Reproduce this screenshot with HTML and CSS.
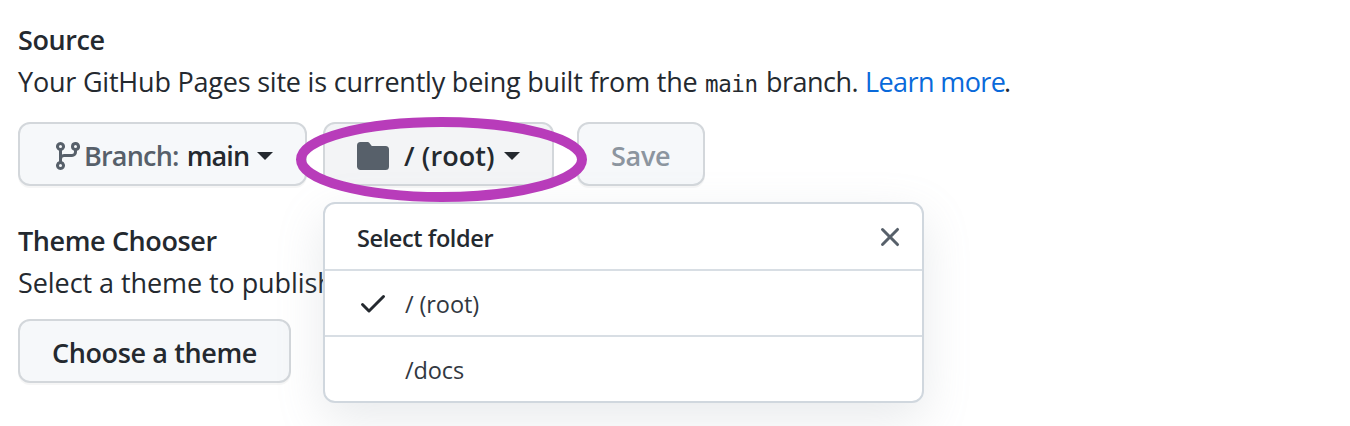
FILE: index.html
```html
<!DOCTYPE html>
<html lang="en">
<head>
<meta charset="utf-8">
<title>GitHub Pages settings</title>
<link rel="stylesheet" href="styles.css">
</head>
<body>
<main class="settings">
  <section class="section">
    <h2 class="heading source-title">Source</h2>
    <p class="description"><span class="built">Your GitHub Pages site is currently being built from the</span><code class="code">main</code><span class="branch-word">branch.</span><a class="link" href="#">Learn more</a>.</p>
    <div class="controls">
      <button class="btn btn-branch">
        <svg class="icon" width="32" height="32" viewBox="0 0 16 16"><path fill-rule="evenodd" d="M11.75 2.5a.75.75 0 100 1.5.75.75 0 000-1.5zm-2.25.75a2.25 2.25 0 113 2.122V6A2.5 2.5 0 0110 8.5H6a1 1 0 00-1 1v1.128a2.251 2.251 0 11-1.5 0V5.372a2.25 2.25 0 111.5 0v1.836A2.492 2.492 0 016 7h4a1 1 0 001-1v-.628A2.25 2.25 0 019.5 3.25zM4.25 12a.75.75 0 100 1.5.75.75 0 000-1.5zM3.5 3.25a.75.75 0 111.5 0 .75.75 0 01-1.5 0z"/></svg>
        <span class="label-muted">Branch:</span><span class="branch-name">main</span><span class="caret"></span>
      </button>
      <div class="folder">
        <button class="btn btn-folder">
          <svg class="icon" width="32" height="32" viewBox="0 0 16 16"><path d="M1.75 1A1.75 1.75 0 0 0 0 2.75v10.5C0 14.216.784 15 1.75 15h12.5A1.75 1.75 0 0 0 16 13.250v-8.500A1.750 1.750 0 0 0 14.250 3H7.500a.25.25 0 0 1-.2-.1l-.9-1.200C6.070 1.260 5.550 1 5 1z"/></svg>
          <span class="folder-name">/ (root)</span><span class="caret"></span>
        </button>
        <div class="menu">
          <div class="menu-header"><span class="menu-title">Select folder</span>
            <svg class="close" width="32" height="32" viewBox="0 0 16 16"><path fill-rule="evenodd" d="M3.72 3.72a.75.75 0 011.06 0L8 6.94l3.22-3.22a.75.75 0 111.06 1.06L9.06 8l3.22 3.22a.75.75 0 11-1.06 1.06L8 9.06l-3.22 3.22a.75.75 0 01-1.06-1.06L6.94 8 3.72 4.78a.75.75 0 010-1.06z"/></svg>
          </div>
          <div class="menu-item"><svg class="check" width="32" height="32" viewBox="0 0 16 16"><path fill-rule="evenodd" d="M13.78 4.22a.75.75 0 010 1.06l-7.25 7.25a.75.75 0 01-1.06 0L2.22 9.28a.75.75 0 011.06-1.06L6 10.94l6.72-6.72a.75.75 0 011.06 0z"/></svg><span class="item-root">/ (root)</span></div>
          <div class="menu-item menu-item-plain"><span class="item-docs">/docs</span></div>
        </div>
        <svg class="highlight" width="292" height="86" viewBox="0 0 292 86"><ellipse cx="146.500" cy="43.500" rx="140.500" ry="37.500"/></svg>
      </div>
      <button class="btn btn-save" disabled><span class="save-label">Save</span></button>
    </div>
  </section>
  <section class="section section-theme">
    <h2 class="heading theme-title">Theme Chooser</h2>
    <p class="description theme-text">Select a theme to publish</p>
    <button class="btn btn-theme"><span class="theme-label">Choose a theme</span></button>
  </section>
</main>
</body>
</html>
```
FILE: styles.css
```css
* { box-sizing: border-box; }
body {
  margin: 0;
  height: 426px;
  overflow: hidden;
  background: #fff;
  color: #24292f;
  font: 27px/42px "Open Sans", "Noto Sans", sans-serif;
}
.settings { padding: 19px 18px 0; }
.heading { margin: 0; font-size: 27px; font-weight: 600; line-height: 42px; letter-spacing: -.4px; }
.description { margin: 0; display: flex; height: 42px; white-space: pre; }
.built { width: 679px; letter-spacing: -.21px; }
.code { width: 69px; padding-left: 8px; font: 22.500px/46px "DejaVu Sans Mono", monospace; letter-spacing: -.4px; }
.branch-word { width: 99px; letter-spacing: -.5px; }
.link { width: 139px; color: #0969da; text-decoration: none; letter-spacing: -.6px; }
.controls { display: flex; margin-top: 19px; }
.btn {
  display: flex;
  align-items: center;
  height: 64px;
  padding: 3px 32px 0;
  border: 2px solid #d3d7db;
  border-radius: 12px;
  background: #f6f8fa;
  box-shadow: 0 2px 0 rgba(27, 31, 36, .04);
  color: #24292f;
  font: 600 27px/40px "Open Sans", "Noto Sans", sans-serif;
  white-space: nowrap;
}
.icon { fill: #57606a; flex: none; }
.caret { flex: none; border: 8px solid transparent; border-top-color: #24292f; border-bottom: 0; }
.folder { position: relative; margin: 0 23px 0 16px; }
.btn-branch { width: 289px; }
.btn-folder { width: 231px; background: #f3f4f6; }
.btn-save { width: 128px; color: #8c959f; }
.save-label { letter-spacing: -.3px; }
.label-muted { color: #57606a; letter-spacing: -.8px; }
.menu {
  position: absolute;
  top: 80px;
  left: 0;
  z-index: 1;
  width: 601px;
  height: 201px;
  border: 2px solid #d0d7de;
  border-radius: 12px;
  background: #fff;
  box-shadow: 0 16px 48px rgba(140, 149, 159, .2);
  font-size: 23.500px;
}
.menu-header, .menu-item { display: flex; align-items: center; height: 66px; border-bottom: 2px solid #d8dee4; }
.menu-header { height: 67px; justify-content: space-between; padding: 2px 16px 0 32px; font-weight: 600; letter-spacing: -.4px; }
.close { fill: #57606a; margin-top: -1px; }
.menu-item { padding: 2px 32px 0; color: #32383f; letter-spacing: -.1px; }
.menu-item:last-child { border: 0; height: 64px; padding-top: 1px; }
.check { fill: #24292f; margin: -2px 16px 0 0; }
.menu-item-plain { padding-left: 80px; }
.highlight { position: absolute; z-index: 2; top: -6px; left: -28px; fill: none; stroke: #b83cba; stroke-width: 10; }
.section-theme { margin-top: 34px; }
.theme-text { letter-spacing: -.07px; }
.btn-theme { width: 273px; margin-top: 15px; }
.theme-label { letter-spacing: -.38px; }
.branch-name { margin: 0 8px; letter-spacing: -.9px; }
.folder-name { margin: 0 9px 0 15px; letter-spacing: .1px; }
```
